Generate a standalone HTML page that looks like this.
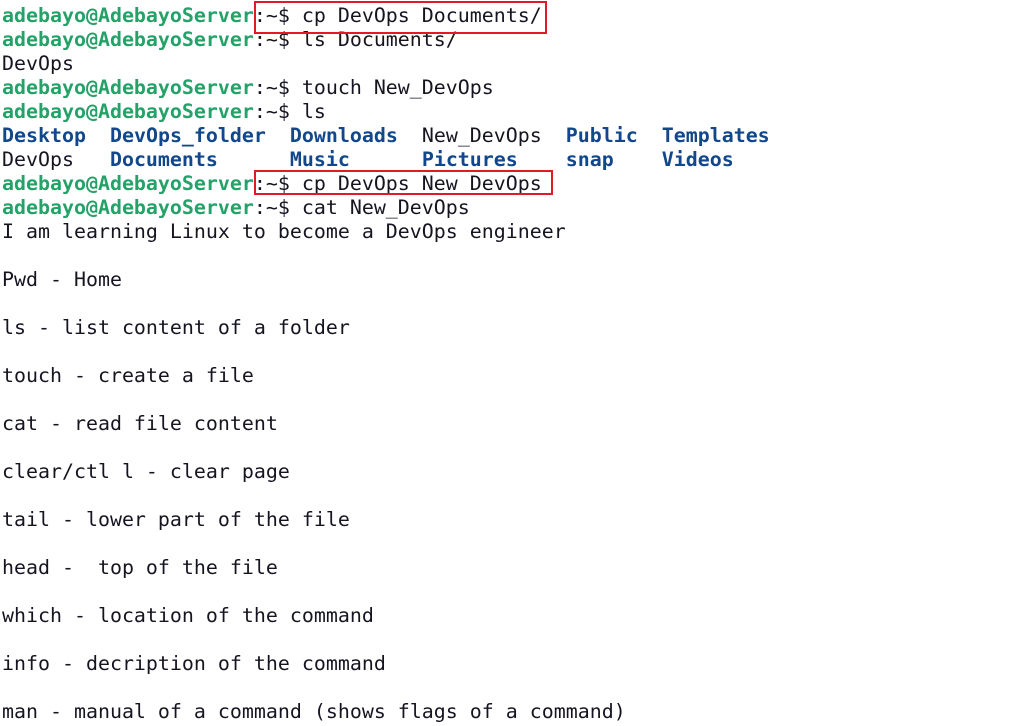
<!DOCTYPE html>
<html><head><style>
body{margin:0;background:#fff;width:1010px;height:726px;overflow:hidden;position:relative}
pre{position:absolute;left:2px;top:4px;margin:0;font-family:"DejaVu Sans Mono","Liberation Mono",monospace;font-size:19.93px;line-height:24px;color:#171421}
.g{color:#26a269;font-weight:bold}.b{color:#12488b;font-weight:bold}
.box{position:absolute;border:2px solid #e01b24}
</style></head><body>
<pre><span class="g">adebayo@AdebayoServer</span>:~$ cp DevOps Documents/
<span class="g">adebayo@AdebayoServer</span>:~$ ls Documents/
DevOps
<span class="g">adebayo@AdebayoServer</span>:~$ touch New_DevOps
<span class="g">adebayo@AdebayoServer</span>:~$ ls
<span class="b">Desktop</span>  <span class="b">DevOps_folder</span>  <span class="b">Downloads</span>  New_DevOps  <span class="b">Public</span>  <span class="b">Templates</span>
DevOps   <span class="b">Documents</span>      <span class="b">Music</span>      <span class="b">Pictures</span>    <span class="b">snap</span>    <span class="b">Videos</span>
<span class="g">adebayo@AdebayoServer</span>:~$ cp DevOps New_DevOps
<span class="g">adebayo@AdebayoServer</span>:~$ cat New_DevOps
I am learning Linux to become a DevOps engineer

Pwd - Home

ls - list content of a folder

touch - create a file

cat - read file content

clear/ctl l - clear page

tail - lower part of the file

head -  top of the file

which - location of the command

info - decription of the command

man - manual of a command (shows flags of a command)</pre>
<div class="box" style="left:254px;top:1px;width:289px;height:29px"></div>
<div class="box" style="left:254px;top:170px;width:295px;height:21px"></div>
</body></html>
